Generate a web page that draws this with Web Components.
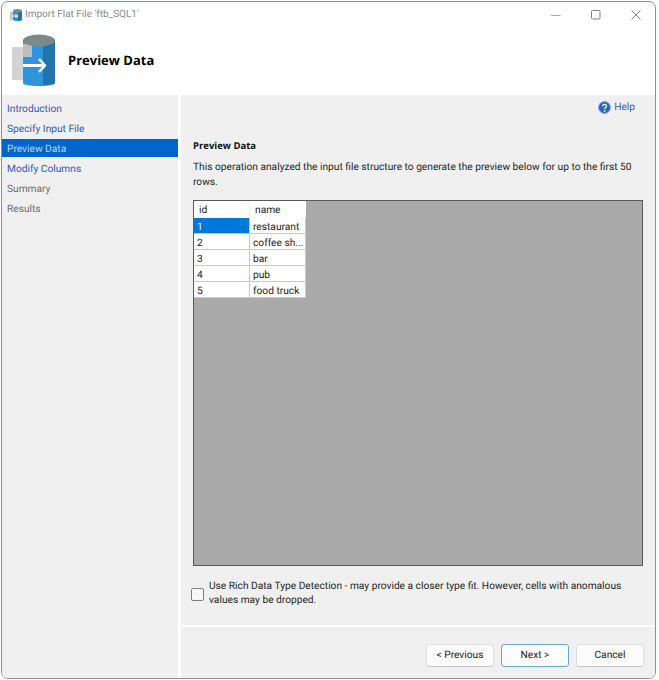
<!DOCTYPE html>
<html><head><meta charset="utf-8"><style>
html,body{margin:0;padding:0;background:#fff;height:680px;overflow:hidden}
body{font:10.2px Roboto,"Open Sans",sans-serif;color:#1b1b1b;text-rendering:geometricPrecision}
</style></head><body>
<wizard-window>
<title-bar slot="title">Import Flat File 'ftb_SQL1'</title-bar>
<wizard-header slot="header">Preview Data</wizard-header>
<wizard-nav slot="nav">
<nav-item>Introduction</nav-item><nav-item>Specify Input File</nav-item><nav-item state="active">Preview Data</nav-item><nav-item>Modify Columns</nav-item><nav-item state="off">Summary</nav-item><nav-item state="off">Results</nav-item>
</wizard-nav>
<preview-page slot="main"></preview-page>
</wizard-window>
<script>
function def(name,html){customElements.define(name,class extends HTMLElement{constructor(){super();this.attachShadow({mode:'open'}).innerHTML=html;}});}
def('wizard-window',`<style>
:host{display:flex;flex-direction:column;box-sizing:border-box;width:655px;height:678px;border:1px solid #8f8f8f;border-radius:7px;overflow:hidden;background:#fff;margin:1px 0 0 1px}
.body{flex:1;display:flex;min-height:0;gap:3px;background:#fff}
</style><slot name="title"></slot><slot name="header"></slot><div class="body"><slot name="nav"></slot><slot name="main"></slot></div>`);
def('title-bar',`<style>
:host{display:flex;align-items:center;height:25px;flex:none;color:#8a8a8a;font-size:10px;padding:0 14px 0 8px}
svg{display:block;flex:none}.t{margin-left:1px;flex:1;white-space:nowrap}
.c{display:flex;align-items:center;gap:30px}.c svg{width:10px;height:10px}
</style>
<svg width="14" height="14" viewBox="0 0 14 14"><rect x="0" y="4" width="6" height="8" fill="#c6c6c6"/><path d="M3 3v8.500c0 .8 1.800 1.500 4.500 1.500s4.500-.7 4.500-1.500V3z" fill="#2b90d9"/><path d="M8 4v9c2.300 0 4-.7 4-1.500V3z" fill="#1f73b0"/><ellipse cx="7.500" cy="2.800" rx="4.500" ry="1.700" fill="#7d8a8a"/><path d="M2 8h5M5.500 6.500 7.500 8 5.500 9.500" stroke="#fff" stroke-width="1.200" fill="none"/></svg>
<span class="t"><slot></slot></span>
<span class="c">
<svg viewBox="0 0 10 10"><path d="M0 5.500h9.500" stroke="#a8a8a8"/></svg>
<svg viewBox="0 0 10 10"><rect x=".5" y=".5" width="8.500" height="8.500" rx="1" fill="none" stroke="#808080"/></svg>
<svg viewBox="0 0 10 10"><path d="M.5 .5 9.500 9.500M9.500 .5 .5 9.500" stroke="#808080"/></svg>
</span>`);
def('wizard-header',`<style>
:host{display:flex;align-items:center;height:68px;flex:none;padding:0 0 2px 10px;box-sizing:border-box}
svg{display:block;flex:none}
b{margin-left:11px;font:700 13px "Open Sans",sans-serif;color:#000}
</style>
<svg width="45" height="52" viewBox="0 0 45 52"><rect x="0" y="13" width="20" height="33" fill="#d3d3d3"/><path d="M11 6v43c0 1.700 7 3 16 3s16-1.300 16-3V6z" fill="#2f94dc"/><path d="M31 12v39.500c6.500-.3 12-1.300 12-2.500V6z" fill="#2274ad"/><path d="M11 10h9v13h-9z" fill="#bdbdbd"/><ellipse cx="27" cy="6.500" rx="16" ry="6" fill="#7b8989"/><path d="M11 31.500h20" stroke="#fff" stroke-width="3.200"/><path d="M27 25 33 31.500 27 38" fill="none" stroke="#fff" stroke-width="2.400"/></svg>
<b><slot></slot></b>`);
def('wizard-nav',`<style>
:host{display:flex;flex-direction:column;width:176px;flex:none;background:#f0f0f0;padding-top:3px;box-sizing:border-box}
</style><slot></slot>`);
def('nav-item',`<style>
:host{display:flex;align-items:center;height:20px;padding:2px 0 0 5px;color:#2f58b8;font-size:10.2px;white-space:nowrap;box-sizing:border-box}
:host([state=active]){background:#0066cc;color:#bcd6f2;height:18px;margin:1px 0}
:host([state=off]){color:#6d6d6d}
</style><slot></slot>`);
def('data-grid',`<style>
:host{display:block;flex:none;height:366px;box-sizing:border-box;background:#a9a9a9;border:1px solid #5a5a5a;font-size:10.2px;color:#222}
.g{display:grid;grid-template-columns:56px 56px;grid-template-rows:17px;grid-auto-rows:16px;width:112px}
.g>div{background:#fff;box-sizing:border-box;border-right:1px solid #c8c8c8;border-bottom:1px solid #c8c8c8;padding:1px 0 0 3px;line-height:18px;white-space:nowrap;overflow:hidden}
.g>.h{line-height:19px;padding:0 0 0 5px;border-bottom:0;border-right:1px solid #ececec}
.g>.h+.h{border-right:0}
.g>.sel{background:#0078d7;color:#e8f2fb}
</style><div class="g"><div class="h">id</div><div class="h">name</div>
<div class="sel">1</div><div>restaurant</div><div>2</div><div>coffee sh...</div><div>3</div><div>bar</div><div>4</div><div>pub</div><div>5</div><div>food truck</div></div>`);
def('wiz-button',`<style>
:host{display:flex;align-items:center;justify-content:center;width:68px;height:23px;box-sizing:border-box;background:#fbfbfb;border:1px solid #dedede;border-bottom-color:#c6c6c6;border-radius:3px;font-size:10.2px;color:#222}
:host([primary]){border-color:#6da6d4;background:#fdfdfd}
</style><slot></slot>`);
def('preview-page',`<style>
:host{flex:1;display:flex;flex-direction:column;min-width:0;background:#f0f0f0;font-size:10.2px;color:#1f1f1f}
.help{display:flex;justify-content:flex-end;align-items:center;gap:3px;height:24px;padding:0 20px 0 0;color:#2f58b8}
.content{padding:0 12px;flex:1;display:flex;flex-direction:column}
h2{margin:20px 0 0;font:700 9.500px/14px "Open Sans",sans-serif;color:#111}
p{margin:7px 0 10px;line-height:15px;white-space:nowrap}
.check{display:flex;align-items:center;gap:5px;margin:14px 0 0 -2px;line-height:14px;white-space:nowrap}
.box{width:11px;height:11px;flex:none;border:1px solid #7f7f7f;border-radius:2px;background:#f8f8f8}
.rule{height:2px;background:#fff;flex:none}
.foot{display:flex;justify-content:flex-end;gap:7px;padding:17px 11px 0 0;height:34px;box-sizing:content-box}
</style>
<div class="help"><svg width="13" height="13" viewBox="0 0 13 13"><circle cx="6.500" cy="6.500" r="6" fill="#2b66c4" stroke="#8fa9d8"/><path d="M4.600 5.200c0-2.500 3.900-2.500 3.900-.2 0 1.400-1.700 1.400-1.800 3" fill="none" stroke="#fff" stroke-width="1.300"/><circle cx="6.600" cy="9.900" r=".9" fill="#fff"/></svg><span>Help</span></div>
<div class="content">
<h2>Preview Data</h2>
<p>This operation analyzed the input file structure to generate the preview below for up to the first 50<br>rows.</p>
<data-grid></data-grid>
<div class="check"><span class="box"></span><span>Use Rich Data Type Detection - may provide a closer type fit. However, cells with anomalous<br>values may be dropped.</span></div>
</div>
<div class="rule"></div>
<div class="foot"><wiz-button>&lt; Previous</wiz-button><wiz-button primary>Next &gt;</wiz-button><wiz-button>Cancel</wiz-button></div>`);
</script>
</body></html>
